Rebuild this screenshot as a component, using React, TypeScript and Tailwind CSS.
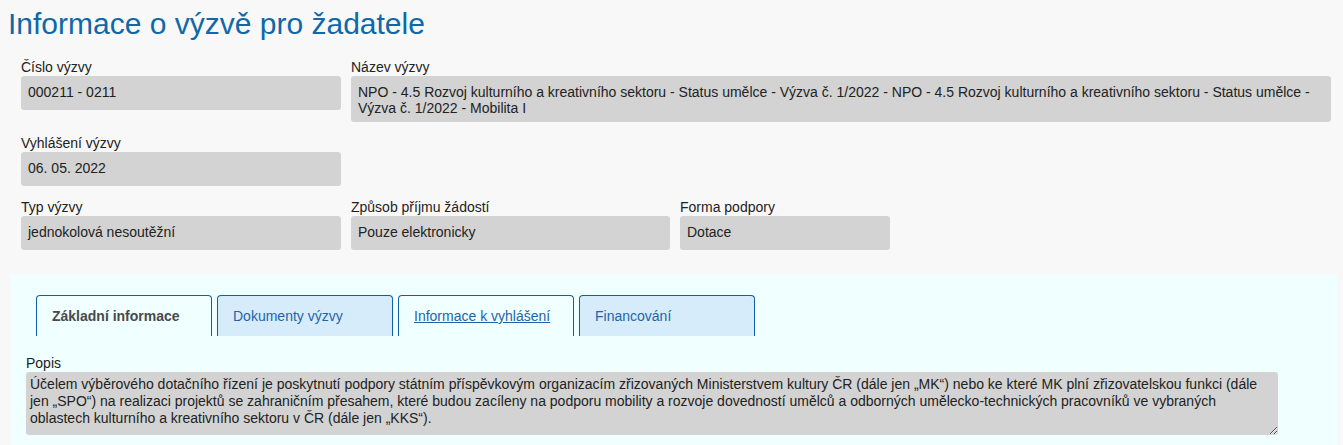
import React from "react";

const font = { fontFamily: '"Liberation Sans", Arial, sans-serif' };

function Field({ label, value, className }: { label: string; value: string; className?: string }) {
  return (
    <div className={className}>
      <div className="text-[14px] leading-[17px] text-[#222]">{label}</div>
      <div className="min-h-[34px] rounded-[3px] bg-[#d3d3d3] px-[7px] pt-[8px] pb-[6px] text-[14px] leading-[16px] text-[#222]">
        {value}
      </div>
    </div>
  );
}

export default function App() {
  const tabs = [
    { t: "Základní informace", kind: "active" },
    { t: "Dokumenty výzvy", kind: "inactive" },
    { t: "Informace k vyhlášení", kind: "hover" },
    { t: "Financování", kind: "inactive" },
  ];
  return (
    <div className="min-h-[445px] w-full overflow-hidden bg-[#f8f8f8]" style={font}>
      <h1 className="pl-[8px] pt-[7px] text-[30px] font-normal leading-[34px] text-[#0f68a8]">
        Informace o výzvě pro žadatele
      </h1>
      <div className="pl-[21px] pr-[12px] pt-[18px]">
        <div className="flex gap-[10px]">
          <Field className="w-[320px]" label="Číslo výzvy" value="000211 - 0211" />
          <Field
            className="flex-1"
            label="Název výzvy"
            value="NPO - 4.5 Rozvoj kulturního a kreativního sektoru - Status umělce - Výzva č. 1/2022 - NPO - 4.5 Rozvoj kulturního a kreativního sektoru - Status umělce - Výzva č. 1/2022 - Mobilita I"
          />
        </div>
        <div className="mt-[13px] flex gap-[10px]">
          <Field className="w-[320px]" label="Vyhlášení výzvy" value="06. 05. 2022" />
        </div>
        <div className="mt-[13px] flex gap-[10px]">
          <Field className="w-[320px]" label="Typ výzvy" value="jednokolová nesoutěžní" />
          <Field className="w-[319px]" label="Způsob příjmu žádostí" value="Pouze elektronicky" />
          <Field className="w-[210px]" label="Forma podpory" value="Dotace" />
        </div>
      </div>
      <div className="ml-[11px] mr-[6px] mt-[25px] bg-[#f0ffff] pl-[15px] pt-[20px] pb-[30px]">
        <div className="ml-[10px] flex gap-[5px]">
          {tabs.map((tab) => (
            <div
              key={tab.t}
              className={
                "flex h-[41px] w-[176px] items-center rounded-t-[4px] border border-b-0 border-[#0e5fa3] px-[15px] text-[14px] leading-[16px] " +
                (tab.kind === "active"
                  ? "bg-[#f0ffff] font-bold text-[#4a4a4a]"
                  : tab.kind === "hover"
                  ? "bg-[#f0ffff] text-[#1f64a8] underline"
                  : "bg-[#d7ecfb] text-[#1f64a8]")
              }
            >
              {tab.t}
            </div>
          ))}
        </div>
        <div className="mt-[19px]">
          <div className="text-[14px] leading-[17px] text-[#222]">Popis</div>
          <textarea
            readOnly
            className="block h-[63px] w-[1252px] rounded-[3px] border-0 bg-[#d3d3d3] px-[4px] pt-[4px] pb-[4px] text-[14px] leading-[17px] text-[#222] outline-none"
            style={font}
            value="Účelem výběrového dotačního řízení je poskytnutí podpory státním příspěvkovým organizacím zřizovaných Ministerstvem kultury ČR (dále jen „MK“) nebo ke které MK plní zřizovatelskou funkci (dále jen „SPO“) na realizaci projektů se zahraničním přesahem, které budou zacíleny na podporu mobility a rozvoje dovedností umělců a odborných umělecko-technických pracovníků ve vybraných oblastech kulturního a kreativního sektoru v ČR (dále jen „KKS“)."
          />
        </div>
      </div>
    </div>
  );
}
